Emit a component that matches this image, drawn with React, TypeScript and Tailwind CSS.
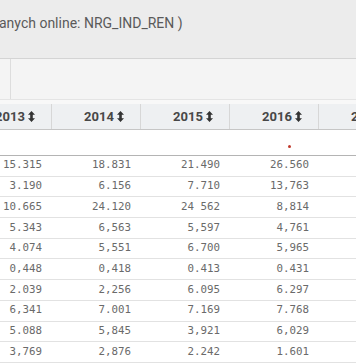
import React from 'react';

const years = ['2013', '2014', '2015', '2016', '2017'];

const rows: string[][] = [
  ['15.315', '18.831', '21.490', '26.560'],
  ['3.190', '6.156', '7.710', '13,763'],
  ['10.665', '24.120', '24 562', '8,814'],
  ['5.343', '6,563', '5,597', '4,761'],
  ['4.074', '5,551', '6.700', '5,965'],
  ['0,448', '0,418', '0.413', '0.431'],
  ['2.039', '2,256', '6.095', '6.297'],
  ['6,341', '7.001', '7.169', '7.768'],
  ['5.088', '5,845', '3,921', '6,029'],
  ['3,769', '2,876', '2.242', '1.601'],
];

function SortIcon() {
  return (
    <svg width="7" height="11" viewBox="0 0 7 11" className="ml-[3px]">
      <path d="M3.5 0 L7 3.8 H4.8 V7.2 H7 L3.5 11 L0 7.2 H2.2 V3.8 H0 Z" fill="#333" />
    </svg>
  );
}

export default function App() {
  return (
    <div
      className="w-[356px] h-[364px] overflow-hidden bg-white"
      style={{ fontFamily: 'Roboto, "Liberation Sans", sans-serif' }}
    >
      {/* title bar */}
      <div className="h-[59px] bg-[#ececec] border-b border-[#d4d4d4] pt-[13px]">
        <span className="block whitespace-nowrap text-[14px] text-[#5a5a5a] ml-[-1px]">
          anych online: NRG_IND_REN )
        </span>
      </div>

      {/* toolbar */}
      <div className="h-[41px] bg-[#f4f4f4] border-b border-[#e4e4e4] flex">
        <div className="w-[11px] border-r border-[#dddddd]" />
      </div>
      <div className="h-[4px] bg-[#f8f8f8]" />

      {/* table */}
      <div className="ml-[-37px] w-[460px]">
        <div className="flex h-[26px] bg-[#eef0f2] border-b border-[#c6c6c6]">
          {years.map((y) => (
            <div
              key={y}
              className="w-[89px] shrink-0 border-r border-[#d7d7d7] flex items-center justify-center pl-[16px] text-[13px] font-bold text-[#474747]"
            >
              {y}
              <SortIcon />
            </div>
          ))}
        </div>
        <div className="flex h-[26px] bg-white border-b border-[#b4b4b4]">
          {years.map((y) => (
            <div key={y} className="w-[89px] shrink-0 relative">
              {y === '2016' && (
                <span className="absolute left-[58px] top-[15px] w-[3px] h-[3px] rounded-full bg-[#c0392b]" />
              )}
            </div>
          ))}
        </div>
        {rows.map((r, i) => (
          <div key={i} className="flex h-[20.7px] border-b border-[#e2e2e2] items-center">
            {r.map((v, j) => (
              <div
                key={j}
                className="w-[89px] shrink-0 text-right pr-[10px] text-[10.8px] text-[#6a6a6a] leading-none"
                style={{ fontFamily: '"DejaVu Sans Mono", monospace' }}
              >
                {v}
              </div>
            ))}
          </div>
        ))}
      </div>
    </div>
  );
}
